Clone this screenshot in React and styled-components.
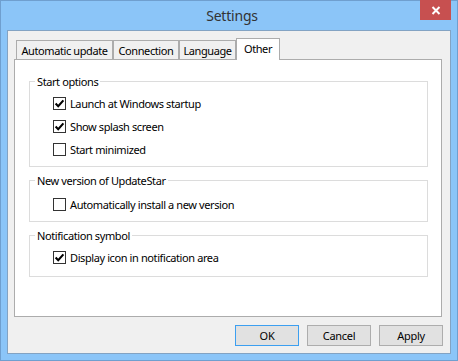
import React, { useState } from "react";
import styled, { createGlobalStyle } from "styled-components";

const GlobalStyle = createGlobalStyle`
  html, body {
    margin: 0;
    padding: 0;
    background: #8bc5f8;
  }
  * {
    box-sizing: border-box;
  }
`;

const tabs = ["Automatic update", "Connection", "Language", "Other"];
const tabWidths = [97, 66, 57, 44];

const groups = [
  {
    title: "Start options",
    pad: 2,
    padBottom: 6,
    items: [
      { label: "Launch at Windows startup", checked: true },
      { label: "Show splash screen", checked: true },
      { label: "Start minimized", checked: false },
    ],
  },
  {
    title: "New version of UpdateStar",
    pad: 4,
    padBottom: 6,
    items: [{ label: "Automatically install a new version", checked: false }],
  },
  {
    title: "Notification symbol",
    pad: 2,
    padBottom: 8,
    items: [{ label: "Display icon in notification area", checked: true }],
  },
];

function Checkbox({ label, checked, onToggle }) {
  return (
    <StRow onClick={onToggle}>
      <StBox>
        {checked && (
          <svg width="11" height="11" viewBox="0 0 11 11">
            <path
              d="M1.6 5.6 L4.2 8.2 L9.4 2.4"
              fill="none"
              stroke="#000"
              strokeWidth="2.1"
            />
          </svg>
        )}
      </StBox>
      <StLabel>{label}</StLabel>
    </StRow>
  );
}

function App() {
  const [active, setActive] = useState(3);
  const [values, setValues] = useState(
    groups.map((g) => g.items.map((i) => i.checked))
  );

  const toggle = (gi, ii) => {
    setValues((prev) =>
      prev.map((row, r) =>
        r === gi ? row.map((v, c) => (c === ii ? !v : v)) : row
      )
    );
  };

  return (
    <StWindow>
      <GlobalStyle />
      <StTitleBar>
        <span />
        <StTitle>Settings</StTitle>
        <StClose>
          <svg width="10" height="9" viewBox="0 0 10 9">
            <path
              d="M1.5 1 L8.5 8 M8.5 1 L1.5 8"
              stroke="#fff"
              strokeWidth="2"
              fill="none"
            />
          </svg>
        </StClose>
      </StTitleBar>
      <StClient>
        <StTabRow>
          {tabs.map((t, i) => (
            <StTab
              key={t}
              $active={i === active}
              $width={tabWidths[i]}
              onClick={() => setActive(i)}
            >
              {t}
            </StTab>
          ))}
        </StTabRow>
        <StPanel>
          {groups.map((g, gi) => (
            <StGroup key={g.title} $pad={g.pad} $padBottom={g.padBottom}>
              <StLegend>{g.title}</StLegend>
              <StItems>
                {g.items.map((it, ii) => (
                  <Checkbox
                    key={it.label}
                    label={it.label}
                    checked={values[gi][ii]}
                    onToggle={() => toggle(gi, ii)}
                  />
                ))}
              </StItems>
            </StGroup>
          ))}
        </StPanel>
        <StButtons>
          <StButton $default>OK</StButton>
          <StButton>Cancel</StButton>
          <StButton>Apply</StButton>
        </StButtons>
      </StClient>
    </StWindow>
  );
}

export default App;

const StWindow = styled.div`
  width: 458px;
  height: 361px;
  background: #8bc5f8;
  border: 1px solid #6f9fcf;
  padding: 0 6px 6px 6px;
  display: flex;
  flex-direction: column;
  font-family: "Noto Sans", "Open Sans", sans-serif;
  font-size: 11px;
  letter-spacing: -0.4px;
  color: #000;
`;

const StTitleBar = styled.div`
  height: 29px;
  display: grid;
  grid-template-columns: 1fr auto 1fr;
  align-items: start;
`;

const StTitle = styled.div`
  font-size: 14px;
  letter-spacing: -0.2px;
  line-height: 30px;
  color: #333;
  padding-left: 6px;
`;

const StClose = styled.div`
  justify-self: end;
  width: 31px;
  height: 20px;
  margin-top: -1px;
  background: #c75050;
  display: flex;
  align-items: center;
  justify-content: center;
`;

const StClient = styled.div`
  flex: 1;
  background: #f0f0f0;
  border: 1px solid #83a3c3;
  padding: 7px 7px 7px 6px;
  display: flex;
  flex-direction: column;
`;

const StTabRow = styled.div`
  display: flex;
  align-items: flex-end;
  padding-left: 2px;
  height: 21px;
  position: relative;
  z-index: 1;
`;

const StTab = styled.div`
  width: ${(p) => p.$width}px;
  height: ${(p) => (p.$active ? 22 : 19)}px;
  margin-bottom: ${(p) => (p.$active ? -1 : 0)}px;
  border: 1px solid #acacac;
  border-bottom: none;
  background: ${(p) => (p.$active ? "#fff" : "#f0f0f0")};
  display: flex;
  align-items: ${(p) => (p.$active ? "flex-start" : "center")};
  padding-top: ${(p) => (p.$active ? 1 : 0)}px;
  justify-content: center;
  white-space: nowrap;
  line-height: 17px;
  cursor: default;
`;

const StPanel = styled.div`
  width: 428px;
  height: 258px;
  background: #fff;
  border: 1px solid #acacac;
  padding: 21px 13px 0 14px;
  display: flex;
  flex-direction: column;
  gap: 12px;
`;

const StGroup = styled.div`
  border: 1px solid #dcdcdc;
  padding: 0 0 ${(p) => p.$padBottom}px 23px;
  display: flex;
  flex-direction: column;
  & + & {
    margin-top: ${(p) => (p.$pad === 2 ? 1 : 0)}px;
  }
  --pad: ${(p) => p.$pad}px;
`;

const StLegend = styled.div`
  margin: -8px 0 0 -18px;
  padding: 0 2px;
  width: fit-content;
  background: #fff;
  line-height: 16px;
`;

const StItems = styled.div`
  padding-top: var(--pad);
  display: flex;
  flex-direction: column;
  gap: 1px;
`;

const StRow = styled.div`
  height: 22px;
  display: flex;
  align-items: center;
  gap: 4px;
  cursor: default;
`;

const StBox = styled.div`
  width: 13px;
  height: 13px;
  border: 1px solid #333;
  background: #fff;
  display: flex;
  align-items: center;
  justify-content: center;
`;

const StLabel = styled.span`
  white-space: nowrap;
`;

const StButtons = styled.div`
  display: flex;
  justify-content: flex-end;
  gap: 8px;
  margin-top: 8px;
`;

const StButton = styled.button`
  width: 64px;
  height: 21px;
  padding: 0;
  background: #e1e1e1;
  border: 1px solid ${(p) => (p.$default ? "#3c9ff0" : "#adadad")};
  font-family: inherit;
  font-size: 11px;
  letter-spacing: -0.3px;
  color: #000;
  cursor: pointer;
`;
